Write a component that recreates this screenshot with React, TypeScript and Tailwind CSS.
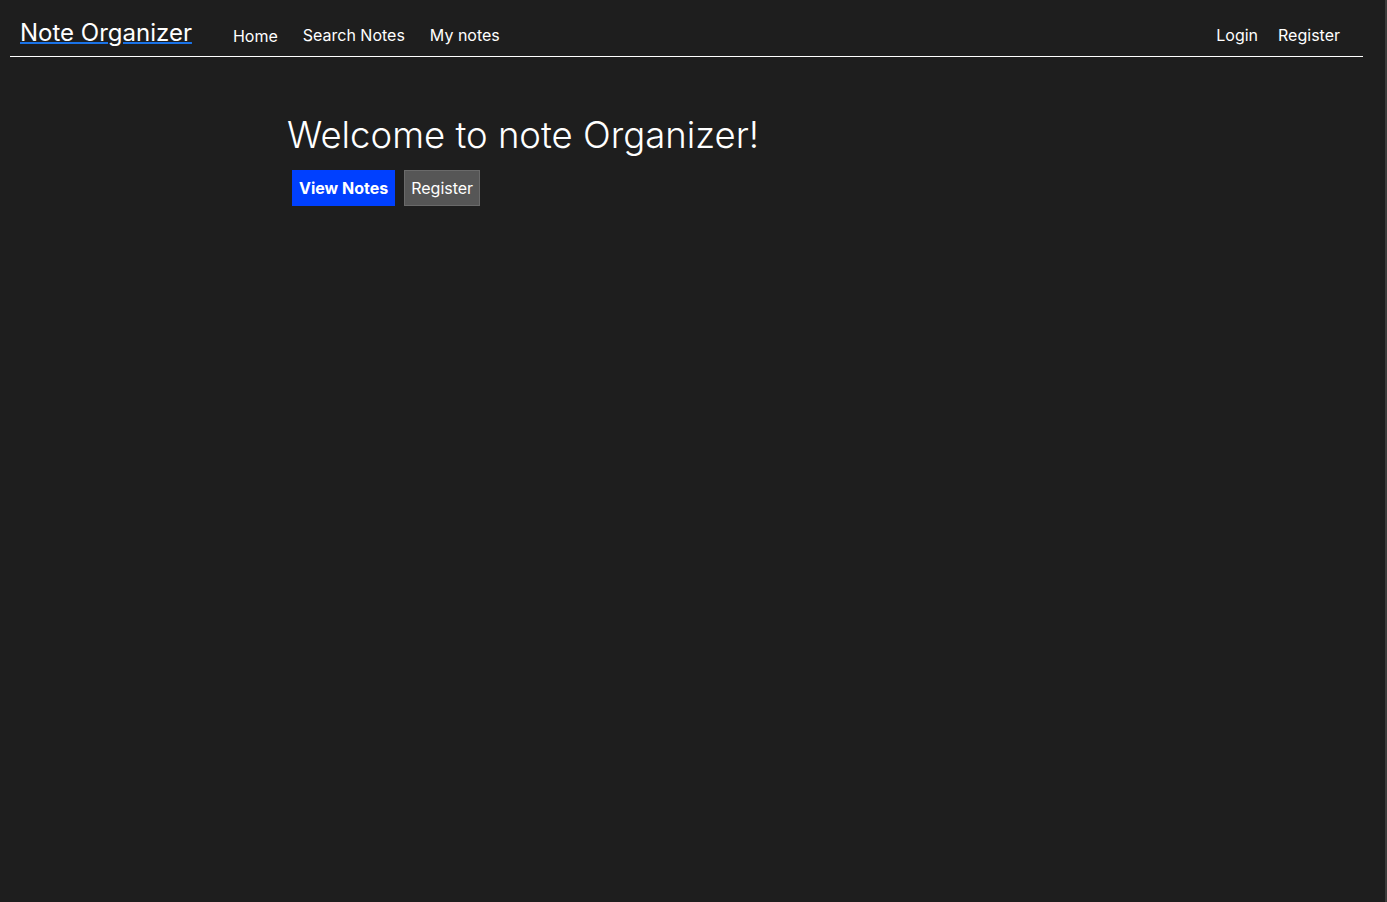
export default function App() {
  return (
    <div className="min-h-screen w-full bg-[#1e1e1e] text-white font-['Inter',sans-serif] border-r-2 border-[#3c3c3c]">
      {/* Navbar */}
      <nav className="mx-[10px] mr-[22px] flex items-end justify-between border-b border-white pb-[10px] pt-[16px]">
        <div className="flex items-end">
          <a
            href="#"
            className="ml-[10px] translate-y-[2px] text-[24px] leading-[30px] underline decoration-[#1a73e8] decoration-2 underline-offset-[1px]"
          >
            Note Organizer
          </a>
          <ul className="ml-[41px] flex gap-[25px] text-[16px] leading-[22px]">
            <li className="translate-y-[1px]"><a href="#">Home</a></li>
            <li><a href="#">Search Notes</a></li>
            <li><a href="#">My notes</a></li>
          </ul>
        </div>
        <ul className="mr-[23px] flex gap-[20px] text-[16px] leading-[22px]">
          <li><a href="#">Login</a></li>
          <li><a href="#">Register</a></li>
        </ul>
      </nav>

      {/* Hero */}
      <main className="ml-[287px] pt-[55px]">
        <h1 className="text-[36.5px] font-light leading-[46px]">Welcome to note Organizer!</h1>
        <div className="mt-[12px] ml-[5px] flex gap-[9px]">
          <button className="h-[36px] bg-[#0040ff] px-[7px] text-[16px] font-bold">View Notes</button>
          <button className="h-[36px] border border-[#6a6a6a] bg-[#565656] px-[6px] text-[16px]">Register</button>
        </div>
      </main>
    </div>
  );
}
